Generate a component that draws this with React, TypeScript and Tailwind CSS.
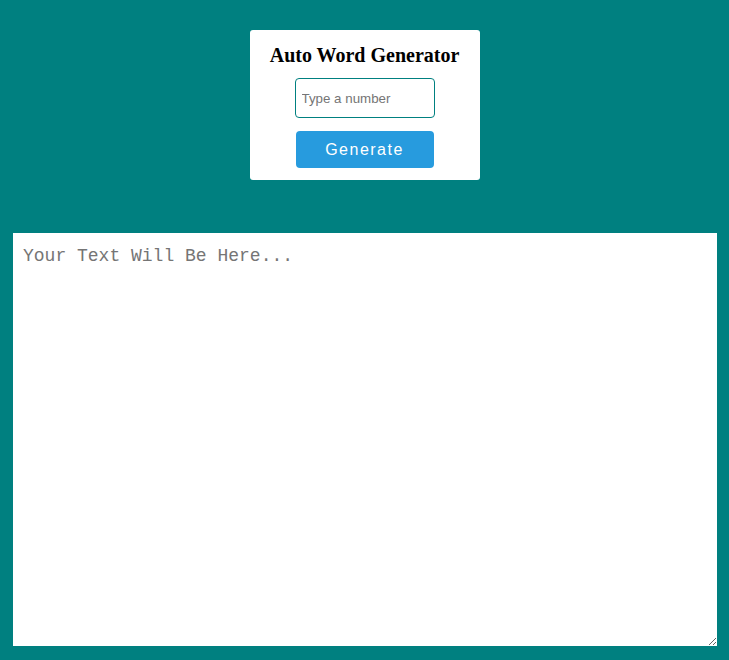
import { useState } from 'react'

function App() {
  const [count, setCount] = useState('')
  const [text, setText] = useState('')

  return (
    <div className="min-h-screen bg-[#008080] pt-[30px]">
      <div className="mx-auto flex w-[230px] flex-col items-center rounded-[3px] bg-white pt-[14px] pb-[12px]">
        <h3 className="text-[20px] font-bold text-black [font-family:'Liberation_Serif',serif] leading-[22px]">
          Auto Word Generator
        </h3>
        <input
          type="number"
          value={count}
          onChange={(e) => setCount(e.target.value)}
          placeholder="Type a number"
          className="mt-[12px] h-[40px] w-[140px] rounded-[4px] border border-[#008080] px-[6px] text-[13.33px] text-black outline-none placeholder:text-[#757575] [font-family:'Liberation_Sans',Arial,sans-serif]"
        />
        <button
          onClick={() => setText('')}
          className="mt-[13px] h-[37px] w-[138px] rounded-[4px] bg-[#279bde] text-[16px] tracking-[1.5px] text-white [font-family:'Liberation_Sans',Arial,sans-serif]"
        >
          Generate
        </button>
      </div>
      <textarea
        value={text}
        onChange={(e) => setText(e.target.value)}
        placeholder="Your Text Will Be Here..."
        className="mt-[53px] ml-[13px] block h-[413px] w-[704px] bg-white p-[10px] text-[18px] text-black outline-none placeholder:text-[#757575] [font-family:'Liberation_Mono',monospace]"
      />
    </div>
  )
}

export default App
